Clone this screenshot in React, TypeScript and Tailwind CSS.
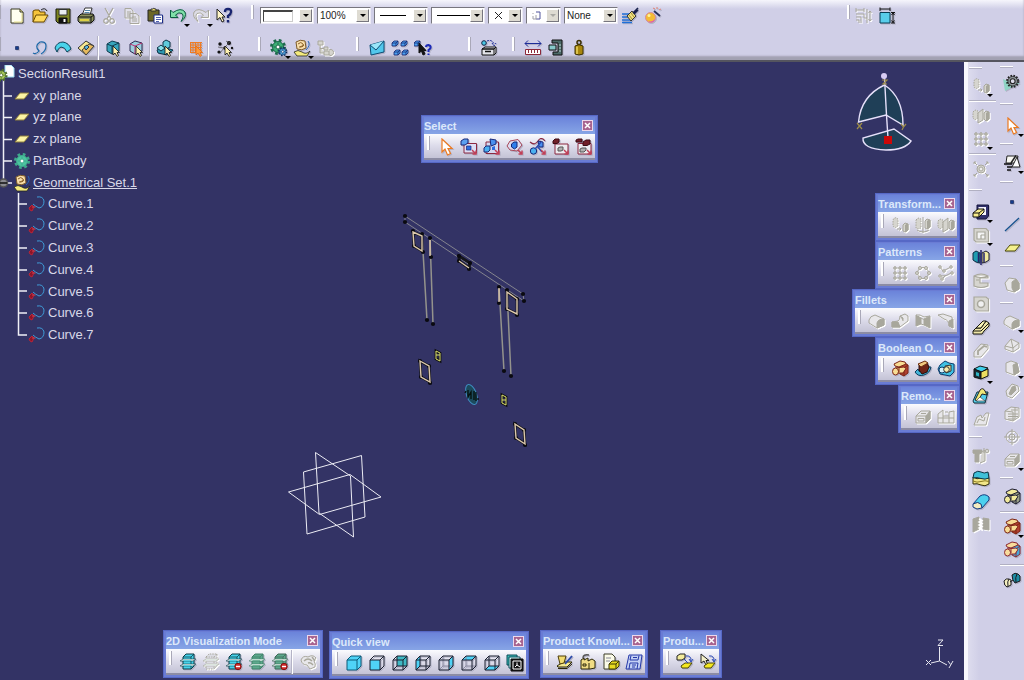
import React, { ReactNode } from "react";

const G = "#a8a79c";
const LG = "#d6d5cf";

/* ---------- shared drawing parts ---------- */

function Cube({ faces }: { faces: string[] }) {
  const c = "#4fd3f7";
  const on = (n: string) => faces.includes(n);
  return (
    <g strokeLinejoin="round">
      {on("back") && <path d="M6 2H16V12H6z" fill="#3fb8c4" stroke="none" />}
      {on("left") && <path d="M2 6L6 2V12L2 16z" fill={c} stroke="none" />}
      {on("bottom") && <path d="M2 16L6 12H16L12 16z" fill={c} stroke="none" />}
      {on("front") && <path d="M2 6H12V16H2z" fill={c} stroke="none" />}
      {on("top") && <path d="M2 6L6 2H16L12 6z" fill={c} stroke="none" />}
      {on("right") && <path d="M12 6L16 2V12L12 16z" fill={c} stroke="none" />}
      {!on("solid") && !on("front") && (
        <path d="M6 2V12H16M6 12L2 16" stroke={on("back") || on("left") || on("bottom") ? "#1a2030" : "#8a8aa0"} />
      )}
      {on("solid") && <path d="M2 6L6 2H16V12L12 16H2z" fill={c} stroke="none" />}
      <path d="M2 6H12V16H2zM2 6L6 2H16V12L12 16M12 6L16 2" stroke={on("solid") ? "#0d5a78" : "#1a2030"} />
    </g>
  );
}

function Gear({ fill, stroke }: { fill: string; stroke: string }) {
  return (
    <g>
      <circle cx="9" cy="9" r="6.5" stroke={stroke} strokeWidth="3" strokeDasharray="2.6 2.5" />
      <circle cx="9" cy="9" r="5.5" fill={fill} stroke={stroke} />
      <circle cx="9" cy="9" r="2" fill="#fff" stroke={stroke} />
      <path d="M9 4.5v2M9 11.5v2M4.5 9h2M11.5 9h2" stroke={stroke} />
    </g>
  );
}

function Cursor({ fill = "#fff", stroke = "#111" }: { fill?: string; stroke?: string }) {
  return <path d="M9 7V16L11 14L13 17.5L14.5 16.5L13 13.5H15.5z" fill={fill} stroke={stroke} strokeWidth=".8" />;
}

function Sheets({ fill, line, dashed }: { fill: string; line: string; dashed?: boolean }) {
  return (
    <g strokeLinejoin="round">
      <path d="M4 4L7 1H15V13L12 16H4z" fill={fill} stroke={line} strokeDasharray={dashed ? "1.5 1" : undefined} />
      <path d="M4 4H12V16M12 4L15 1" stroke={line} strokeWidth=".8" strokeDasharray={dashed ? "1.5 1" : undefined} />
      <path d="M1 8L4 6H17L14 8zM1 13L4 11H17L14 13z" stroke={line} strokeWidth=".6" fill="#f2fffb" />
      <path d="M4.500 7.500H12M4.500 12.500H12" stroke={fill} strokeWidth=".8" />
    </g>
  );
}

function Solids({ a, b, line }: { a: string; b: string; line: string }) {
  return (
    <g stroke={line} strokeLinejoin="round">
      <path d="M9 6L13 3L17 5V13L13 16L9 14z" fill={b} />
      <path d="M13 8V16M13 8L17 5" />
      <path d="M3 4L9 1L14 2L15 4L8 7L4 6z" fill={a} />
      <path d="M4 8L13 7L15 8.500L12 13H4z" fill={a} />
      <ellipse cx="4.500" cy="11.500" rx="3" ry="3.500" fill={a} />
      <path d="M8 7V12" />
    </g>
  );
}

function SmallBox({ x, y }: { x: number; y: number }) {
  return (
    <path
      d={`M${x} ${y + 2}l2-2h4v3l-2 2h-4zM${x} ${y + 2}h4v3M${x + 4} ${y + 2}l2-2`}
      fill="#4aa0f0"
      stroke="#16246c"
      strokeWidth=".8"
    />
  );
}

function PinkArrow() {
  return <path d="M12 12L15.500 15.500M16 12.500V16H12.500" stroke="#c04058" strokeWidth="1.5" />;
}

const icons: Record<string, ReactNode> = {
  newFile: (
    <g>
      <path d="M3 2H12L15 5V16H3z" fill="#fffff0" stroke="#3a3a20" />
      <path d="M12 2V5H15" fill="#e8e0a0" stroke="#3a3a20" />
      <path d="M14 6V15H6" stroke="#e8e090" />
    </g>
  ),
  open: (
    <g>
      <path d="M2 15V4L4 3H8L9 5H14V8" fill="#f6c43c" stroke="#6a4a00" />
      <path d="M2 15L5 8H17L13 15z" fill="#ffd95c" stroke="#6a4a00" />
      <path d="M10 3Q14 0 16 4" stroke="#222" />
    </g>
  ),
  save: (
    <g>
      <path d="M2 2H16V16H4L2 14z" fill="#7d8422" stroke="#16180a" />
      <path d="M5 2.500H13V8H5z" fill="#e9ecef" stroke="#333" />
      <path d="M5 11H13V16H5z" fill="#111" />
      <path d="M10.500 12V15" stroke="#fff" strokeWidth="2" />
    </g>
  ),
  print: (
    <g>
      <path d="M5 8L8 1H15L13 8z" fill="#fff" stroke="#333" />
      <path d="M8 3.500H13M7.500 5.500H12.500" stroke="#58a" />
      <path d="M1 10L4 7H16L17 9V13L14 16H3L1 14z" fill="#8a905c" stroke="#111" />
      <path d="M1 10H14L17 8M14 10V16" stroke="#111" />
      <path d="M3 13H12" stroke="#f0e040" strokeWidth="1.600" />
    </g>
  ),
  cut: (
    <path d="M5 1L11 12M13 1L7 12M7 12a2 2 0 1 0-2 4a2 2 0 0 0 2-4M11 12a2 2 0 1 1 2 4a2 2 0 0 1-2-4" stroke={G} strokeWidth="1.300" />
  ),
  copy: (
    <path
      d="M2 1.500H8L10 4V11H2zM7 6.500H13L16 9V16.500H7zM4 5H8M4 7H7M4 9H7M9 10H13M9 12H14M9 14H14"
      stroke={G}
      fill="#e2e1ea"
    />
  ),
  paste: (
    <g>
      <path d="M2 3H13V14H2z" fill="#6b6626" stroke="#222" />
      <path d="M5 4V2H7Q7.500 .5 9 2H10V4z" fill="#f2e26c" stroke="#333" />
      <path d="M8 8H16.500V16H8z" fill="#fff" stroke="#1c2c88" />
      <path d="M10 10.500H15M10 12.500H15M10 14.500H13" stroke="#5060b0" />
    </g>
  ),
  undo: <path d="M1.500 3V10.500H9L6.500 8Q10 4.500 13 6.500Q15.500 9 12 14.500Q18 10 16 5Q12 0 4 5.500z" fill="#7fe0a8" stroke="#0c5c40" />,
  redo: <path d="M16.500 3V10.500H9L11.500 8Q8 4.500 5 6.500Q2.500 9 6 14.500Q0 10 2 5Q6 0 14 5.500z" fill="#dddce6" stroke={G} />,
  helpArrow: (
    <g>
      <path d="M2 2V13L5 10.500L7 15L9 14L7 10H10z" fill="#fff6c8" stroke="#222" />
      <path d="M10 5Q10 2 13 2Q16.500 2 16 5Q16 7 13 9V11M13 13V15.500" stroke="#182470" strokeWidth="2.400" />
    </g>
  ),
  point: <path d="M7.500 7.500H10.500V10.500H7.500z" fill="#143c8c" stroke="#0a1c50" strokeWidth=".6" />,
  spline: <path d="M2 14Q5 16 8 12Q3 7 9 3Q15 2 15 7Q15 12 10 15" stroke="#1c68a8" strokeWidth="1.200" />,
  surface: <path d="M1 9Q3 3 9 3Q15 4 17 10L13 13Q11 8 7 8Q4 9 3 13z" fill="#49d3ea" stroke="#0c4058" />,
  tag: (
    <g>
      <path d="M1 9L9 2L17 7L9 16z" fill="#f8e890" stroke="#333" />
      <path d="M5 11L12 5L17 7L9 16z" fill="#e6b95c" stroke="#444" />
      <path d="M7 8L10 6L12 8L9 11z" fill="#5fb8dc" stroke="#234" />
    </g>
  ),
  solidPick: (
    <g>
      <path d="M3 5L8 2L15 4V12L8 15L3 12z" fill="#38a6bc" stroke="#103c50" />
      <path d="M3 5L8 7V15M8 7L15 4" stroke="#103c50" />
      <Cursor fill="#fff2b0" />
    </g>
  ),
  edgePick: (
    <g>
      <path d="M3 5L8 2L15 4V12L8 15L3 12z" fill="#9ccede" stroke="#2c2c50" />
      <path d="M3 5L8 7V15M8 7L15 4" stroke="#c03070" />
      <Cursor fill="#fff2b0" />
    </g>
  ),
  assemblyPick: (
    <g>
      <path d="M1 11L6 8L17 11L11 16L2 14z" fill="#2f9ab2" stroke="#0c3448" />
      <path d="M7 3L10 1L14 3V8L10 10L7 8z" fill="#5fcadb" stroke="#0c3448" />
      <path d="M1 9L5 6L9 9L5 12z" fill="#88e0ea" stroke="#0c3448" />
      <Cursor fill="#fff2b0" />
    </g>
  ),
  gridPick: (
    <g>
      <path
        d="M3 3.500H15M3 6H15M3 8.500H15M3 11H15M3 13.500H15M3.500 3V14M6 3V14M8.500 3V14M11 3V14M13.500 3V14"
        stroke="#ef7c24"
      />
      <Cursor fill="#ff9c3c" stroke="#e46c14" />
    </g>
  ),
  dotsPick: (
    <g>
      <g fill="#111" stroke="none">
        <circle cx="4" cy="5" r="1.700" />
        <circle cx="13" cy="4" r="2" />
        <circle cx="9" cy="9" r="1.800" />
        <circle cx="3" cy="13" r="1.600" />
        <circle cx="16" cy="9" r="1.200" />
      </g>
      <path d="M2 8L8 9L14 3M4 14L8 9M13 4L10 2" stroke="#444" strokeWidth=".7" />
      <Cursor fill="#fff2b0" />
    </g>
  ),
  greenGears: (
    <g>
      <g transform="translate(-1 -1)">
        <Gear fill="#3cae74" stroke="#1c6a4c" />
      </g>
      <g transform="translate(7.500 7.500) scale(.58)">
        <Gear fill="#52a8e0" stroke="#0a2c60" />
      </g>
    </g>
  ),
  geomSet: (
    <g>
      <path d="M3 3Q7 0 12 2L13 9Q9 12 4 10z" fill="#f8deaa" stroke="#7c5a28" />
      <path d="M5 5Q8 2 10 5T6 8M7 8L11 6" stroke="#8a6028" />
      <path d="M1 13Q5 10 9 13Q13 16 17 12L14 17H4z" fill="#f4ea7c" stroke="#222" strokeWidth=".8" />
      <path d="M15 2Q18 6 13 11" stroke="#2c68b8" />
    </g>
  ),
  treeDisabled: <path d="M2 2H7V6H2zM8 8H12V11H8zM4 6V14H8M4 9.500H8M8 12H13V16H8zM13 11a3 3 0 1 1 0 5" stroke={G} fill={LG} />,
  envelope: (
    <g>
      <path d="M2 6L16 2V13L3 16z" fill="#52c8ec" stroke="#0d4c74" />
      <path d="M2 6L8 11L16 2" stroke="#0d4c74" fill="#9ae6fa" />
    </g>
  ),
  fourBoxes: (
    <g>
      <SmallBox x={1} y={2} />
      <SmallBox x={10} y={2} />
      <SmallBox x={3} y={11} />
      <SmallBox x={11} y={11} />
    </g>
  ),
  boxHelp: (
    <g>
      <SmallBox x={0} y={2} />
      <path d="M5 4V14L7.500 12L9 16L11 15L9.500 11.500H12z" fill="#111" />
      <path d="M12 8Q12 6 14.500 6Q17 6.500 16.500 9Q16 10 14.500 11V13M14.500 14.500V16" stroke="#1c2ab8" strokeWidth="2" />
    </g>
  ),
  catalog: (
    <g>
      <path d="M2 10L5 8H16L14 10zM2 10H14V16H2zM14 10L16 8V14L14 16" fill="#e4e4ea" stroke="#111" />
      <path d="M5 12.500H11" stroke="#111" strokeWidth="1.500" />
      <circle cx="4" cy="4" r="2.300" fill="#4ac8e4" stroke="#124" />
      <path d="M7 2Q12 0 14 5M12 4L14 7L16 4" stroke="#1c2c98" strokeDasharray="2 1" />
    </g>
  ),
  measure: (
    <g>
      <path d="M1 4.500H17M4 1.500L1 4.500L4 7.500M14 1.500L17 4.500L14 7.500" stroke="#1c2c98" />
      <path d="M1.500 10.500H16.500V15.500H1.500z" fill="#fff" stroke="#8c2838" />
      <path d="M4.500 11V14M7.500 11V14M10.500 11V14M13.500 11V14" stroke="#8c2838" />
    </g>
  ),
  caliper: (
    <g>
      <path d="M5 1H15V16H6V13H11V4H5z" fill="#4c6a68" stroke="#111" />
      <path d="M2 6H9V11H2z" fill="#86c8ca" stroke="#111" />
      <path d="M12 6H14M12 9H14M12 12H14" stroke="#c0d8d8" />
    </g>
  ),
  weight: (
    <g>
      <circle cx="9" cy="3.500" r="2" stroke="#3c3000" strokeWidth="1.500" />
      <path d="M5 7Q9 4.500 13 7V15Q9 17 5 15z" fill="#a8860c" stroke="#3c3000" />
      <path d="M7 7.500V15" stroke="#ecd460" strokeWidth="1.500" />
    </g>
  ),
  brush: (
    <g>
      <path d="M1 7H9M1 10H8M1 13H10M1 15.500H11" stroke="#1f6fd8" strokeWidth="1.500" />
      <path d="M6 9L11 4L15 9L10 14z" fill="#f2e27c" stroke="#333" />
      <path d="M8 8L11 12M10 6L13 10" stroke="#8c7c30" strokeWidth=".8" />
      <path d="M12 6L17 1M13 7L17 3" stroke="#18204c" strokeWidth="1.600" />
    </g>
  ),
  wand: (
    <g>
      <circle cx="6.500" cy="10.500" r="5" fill="#f4bc34" stroke="#d48aa0" />
      <path d="M2 12Q6 17 11 12Q10 16 6 15.500z" fill="#e060b0" stroke="none" />
      <circle cx="5" cy="8.500" r="1.500" fill="#fff29c" stroke="none" />
      <path d="M10 4L16 9" stroke="#28305c" strokeWidth="1.800" />
      <path d="M9 1L11 2M13 0V2M15 3L17 2" stroke="#e08070" />
    </g>
  ),
  dimOff: (
    <path
      d="M1 3H9M1 1V5M9 1V5M1 7H9V11H12M1 10H6V16M1 13H4V16M12 2V16M15 4V14M13.500 6L15 4L16.500 6M13.500 12L15 14L16.500 12"
      stroke={G}
      fill="none"
    />
  ),
  dimOn: (
    <g>
      <path d="M2 5.500H12V16H2z" fill="#58cdea" stroke="#0a3c54" />
      <path d="M2 2H12M2 .5V4M12 .5V4M15 5.500V16M13 5.500H17M13 16H17M13.500 8L15 6L16.500 8M13.500 13.500L15 15.500L16.500 13.500" stroke="#111" />
    </g>
  ),

  orangeArrow: <path d="M5 1V14L8 11L10.500 17L13.500 15.500L11 10.500H15z" fill="#fff" stroke="#ec7a20" strokeWidth="1.200" />,
  selTrap: (
    <g>
      <path d="M4 5.500H16.500V15H4z" fill="#dcdef4" stroke="#8c2840" />
      <path d="M1 3L4 1H8V5L5 7H1z" fill="#5aa0f0" stroke="#182878" />
      <path d="M6.500 8H11V12H6.500z" fill="#2c6ce0" stroke="#182878" strokeWidth=".7" />
      <PinkArrow />
    </g>
  ),
  selIntersect: (
    <g>
      <path d="M3 4H15.500V15.500H3z" fill="#d4d8f0" stroke="#8c2840" />
      <path d="M7 1L13 2V6L8 8z" fill="#4a90f0" stroke="#182878" />
      <path d="M1 10L3 8H7V12L5 14H1z" fill="#4ab0f0" stroke="#182878" />
      <path d="M9 9L12 8V12H9z" fill="#2c6ce0" stroke="none" />
      <PinkArrow />
    </g>
  ),
  selPolygon: (
    <g>
      <path d="M1 8L4 3L12 1.500L16 7L11 13L4 12z" fill="#dcdcf0" stroke="#a84858" />
      <path d="M5.500 6L8 4H11V9L8.500 11L5.500 9z" fill="#2f80ec" stroke="#142878" />
      <PinkArrow />
    </g>
  ),
  selPaint: (
    <g>
      <path d="M1 4Q6 8 9 3T16 3" stroke="#8c2840" strokeWidth="1.200" />
      <path d="M9 3L14 4V9L10 9z" fill="#4a90f0" stroke="#182878" />
      <circle cx="4.500" cy="13" r="3.200" fill="#4ab0f0" stroke="#182878" />
      <path d="M6 11L12 4M8 8L13 14" stroke="#2a4ab0" strokeWidth="1.300" />
      <PinkArrow />
    </g>
  ),
  selOutTrap: (
    <g>
      <path d="M3 6H16V16H3z" fill="#ececf0" stroke="#8c2840" />
      <path d="M1 3L3 1H7V4L5 5.500H1z" fill="#702028" stroke="#3c0c14" />
      <path d="M6 10L8 9H11V12L9 13H6z" fill="#b0b0b0" stroke="#555" />
      <PinkArrow />
    </g>
  ),
  selOutIntersect: (
    <g>
      <path d="M3 5.500H16V16H3z" fill="#ececf0" stroke="#8c2840" />
      <path d="M1 2L3 1H7V4H1zM8 4L11 2H15V6L12 7.500H8z" fill="#702028" stroke="#3c0c14" />
      <path d="M5 11L7 10H11V12L9 14H5z" fill="#b0b0b0" stroke="#555" />
      <PinkArrow />
    </g>
  ),

  translate: (
    <g stroke={G} fill={LG}>
      <path d="M2 4Q4 0 7 3V10Q4 13 2 10z" strokeDasharray="1.500 1" />
      <path d="M12 9L14 7L17 8V14L14 16L12 15z" />
      <path d="M14.500 9L17 8V14L14.500 16z" fill={G} />
      <path d="M6 13H10M8.500 11.500L10 13L8.500 14.500" />
    </g>
  ),
  rotate: (
    <g stroke={G} fill={LG}>
      <path d="M2 4L4 2L7 3V12L4 13L2 12z" strokeDasharray="1.500 1" />
      <path d="M11 5L13 3L16 4V11L13 13L11 12z" />
      <path d="M13.500 5L16 4V11L13.500 13z" fill={G} />
      <path d="M9 1V17M3 14Q9 18 15 14" fill="none" />
    </g>
  ),
  mirror: (
    <g stroke={G} fill={LG}>
      <path d="M1 5L3 3L6 4V11L3 13L1 11z" strokeDasharray="1.500 1" />
      <path d="M12 6L14 4L17 5V12L14 14L12 12z" />
      <path d="M14.500 6L17 5V12L14.500 14z" fill={G} />
      <path d="M6 6L11 2V13L6 16z" />
    </g>
  ),
  rectPattern: (
    <g stroke={G}>
      <path d="M4 2V16M9 2V16M14 2V16M2 4H16M2 9H16M2 14H16" strokeWidth=".8" />
      <path d="M3 3h2v2h-2zM8 3h2v2h-2zM13 3h2v2h-2zM3 8h2v2h-2zM8 8h2v2h-2zM13 8h2v2h-2zM3 13h2v2h-2zM8 13h2v2h-2zM13 13h2v2h-2z" fill={LG} />
    </g>
  ),
  circPattern: (
    <g stroke={G} fill={LG}>
      <circle cx="9" cy="9" r="5.500" fill="none" />
      <circle cx="6" cy="4" r="1.500" />
      <circle cx="12" cy="4" r="1.500" />
      <circle cx="15" cy="9" r="1.500" />
      <circle cx="12" cy="14" r="1.500" />
      <circle cx="6" cy="14" r="1.500" />
      <circle cx="3" cy="9" r="1.500" />
    </g>
  ),
  userPattern: (
    <g stroke={G} fill={LG}>
      <path d="M3 3L6 7L14 3M3 12Q9 13 14 9M4 16L9 11" fill="none" />
      <circle cx="3" cy="3" r="1.300" />
      <circle cx="7" cy="7" r="1.300" />
      <circle cx="14" cy="3" r="1.300" />
      <circle cx="3" cy="12" r="1.300" />
      <circle cx="15" cy="9" r="1.300" />
      <circle cx="5" cy="15" r="1.300" />
    </g>
  ),
  scale: (
    <g stroke={G} fill={LG}>
      <circle cx="9" cy="9" r="4" />
      <circle cx="9" cy="9" r="2" fill="#eee" />
      <path d="M2 2L5 5M16 2L13 5M2 16L5 13M16 16L13 13M2 4V2H4M14 2H16V4M2 14V16H4M14 16H16V14" />
    </g>
  ),
  fillet: (
    <g stroke={G}>
      <path d="M1 8Q2 4 7 3L16 7V13L9 16L1 11z" fill="#e8e7ea" />
      <path d="M9 16V11Q10 7 16 7V13z" fill={G} />
    </g>
  ),
  faceFillet: (
    <g stroke={G}>
      <path d="M1 10L7 9Q9 8 9 4L14 2L17 4V9L9 15H1z" fill="#e8e7ea" />
      <path d="M1 10H7L9 15H1zM9 4L12 6V9" fill={G} />
    </g>
  ),
  triFillet: (
    <g stroke={G}>
      <path d="M2 3L7 6V12L2 14zM16 4L10 7V13L16 16z" fill={G} />
      <path d="M7 6Q10 8 10 7V13L7 12zM2 3H6L10 5L16 4" fill="#e8e7ea" />
    </g>
  ),
  variFillet: (
    <g stroke={G}>
      <path d="M1 3L6 2L15 5L16 16L12 14Q12 8 7 7z" fill="#e8e7ea" />
      <path d="M12 9L16 7V16L12 14z" fill={G} />
    </g>
  ),
  chamfer: (
    <g stroke={G}>
      <path d="M2 10L8 3L16 7V12L10 16L2 13z" fill="#e8e7ea" />
      <path d="M2 10L10 12V16M10 12L16 7M8 3L10 12" />
    </g>
  ),
  draftBox: (
    <g stroke={G}>
      <path d="M3 4L8 2L14 4L16 13L11 16L3 13z" fill="#e8e7ea" />
      <path d="M10 6L14 4L16 13L11 16z" fill={G} />
    </g>
  ),
  shellBox: (
    <g stroke={G}>
      <path d="M2 8L7 3H16V11L12 15H2z" fill="#e8e7ea" />
      <path d="M12 8L16 3V11L12 15z" fill={G} />
      <path d="M2 8H12V15M4 10.500H10V13H4zM7 5.500H12" />
    </g>
  ),
  removeFace: (
    <g stroke={G}>
      <path d="M1 6L6 2V8H12V4L17 3V15H1z" fill="#e8e7ea" />
      <path d="M6 8V15M12 8V15M1 10H17M8 4H11" />
    </g>
  ),
  thickness: (
    <g stroke={G}>
      <path d="M3 9L9 2L15 4L16 9L9 16L4 14z" fill="#e8e7ea" />
      <path d="M9 5L12 4L13 8L8 13L6 12z" fill={G} />
    </g>
  ),
  hexBlock: (
    <g stroke={G}>
      <path d="M2 7L6 2L13 3L16 7V13L11 16L4 14z" fill="#e8e7ea" />
      <path d="M9 6L13 3L16 7V13L11 16L9 12z" fill={G} />
    </g>
  ),
  thread: (
    <g stroke={G}>
      <path d="M2 6L8 2L16 3V12L10 16L2 14z" fill="#e8e7ea" />
      <path d="M2 6L10 7V16M5 9H15M5 11.500H15M5 14H12M8 5H15M12 3V14" />
    </g>
  ),
  target: (
    <g stroke={G}>
      <circle cx="9" cy="9" r="6" />
      <circle cx="9" cy="9" r="3" />
      <path d="M9 1V17M1 9H17" />
    </g>
  ),

  boolAssemble: <Solids a="#f8dc94" b="#b04030" line="#7c2414" />,
  boolAdd: (
    <g strokeLinejoin="round">
      <path d="M1 12Q4 17 10 15Q16 13 17 7L14 7Q13 12 8 12Q4 12 4 9z" fill="#44b4d8" stroke="#0c3c5c" />
      <path d="M5 4L13 3L15 7L13 12L8 14L5 10z" fill="#702418" stroke="#2a0c08" />
      <path d="M4 4L11 1L14 3L7 7z" fill="#f0c880" stroke="#6c2c10" />
    </g>
  ),
  boolRemove: (
    <g>
      <path d="M3 5L8 1L12 3L17 4V12L13 16L3 14L1 9z" fill="#3fc0e4" stroke="#0c3c6c" />
      <path d="M8 6L14 5V11L9 13z" fill="#f4dc94" stroke="#333" />
      <circle cx="5" cy="10" r="3" fill="#d6f0fa" stroke="#0c3c6c" />
      <circle cx="9.500" cy="9.500" r="2.800" fill="#f8ecb0" stroke="#333" />
    </g>
  ),
  boolTrim: <Solids a="#f2ea9c" b="#9aa088" line="#1c1c30" />,
  boolLump: <Solids a="#f8dc9c" b="#44a8dc" line="#8c2830" />,
  boolPair: (
    <g stroke="#1c1c20">
      <path d="M1 10Q3 7 6 8L8 9V14L4 16Q1 15 1 10z" fill="#f4efc0" />
      <path d="M6 8Q4 10 5 15.500" />
      <path d="M9 4Q12 1 15 3L17 5V10L12 12Q9 9 9 4z" fill="#1d8ca4" />
      <path d="M14 3Q12 6 13 11.500" />
      <path d="M7 11L10 9" />
    </g>
  ),

  pad: (
    <g>
      <path d="M5 2H16.500V13L14 16H5z" fill="#30306c" stroke="#14143c" />
      <path d="M6.500 4H14V12H6.500z" fill="#f4f4fc" stroke="none" />
      <path d="M1 10L6 6H12V9L7 14H1z" fill="#f8ec8c" stroke="#111" />
      <path d="M1 10H7V14M7 10L12 6" stroke="#111" />
    </g>
  ),
  pocket: (
    <g stroke={G} strokeWidth="1.200">
      <path d="M2 2.500H14L16.500 5V16H4L2 14z" fill={LG} />
      <path d="M5 6H13V13H5z" fill="#f4f4f4" />
      <path d="M9 9H13M9 9V13" />
    </g>
  ),
  shaft: (
    <g>
      <path d="M1 4L4 2L8 4V14L4 13L1 11z" fill="#1f9cb0" stroke="#0c2c44" />
      <path d="M17 4L14 2L10 4V14L14 13L17 11z" fill="#f0eaa0" stroke="#1c1c30" />
      <path d="M9 1V16M6.500 4V13M12 4V13" stroke="#24246c" strokeWidth="1.500" />
    </g>
  ),
  groove: <path d="M2 4Q9 0 16 4V6H8V11H16V14Q9 17 2 14zM2 4Q9 7 16 4M4 8H7" stroke={G} fill={LG} strokeWidth="1.200" />,
  hole: (
    <g stroke={G} fill={LG}>
      <path d="M2 2H14L16.500 4V16H4L2 14z" strokeWidth="1.200" />
      <circle cx="9" cy="9" r="3.500" strokeWidth="1.500" fill="#f0f0f0" />
    </g>
  ),
  rib: (
    <g stroke="#181810" strokeLinejoin="round">
      <path d="M1 13L4 10H9L14 3L17 5V8L12 13L10 16H1z" fill="#efe7a8" />
      <path d="M4 10L11 3L14 3L9 10z" fill="#f8f2b4" />
      <path d="M1 13H9L17 5" />
    </g>
  ),
  slot: (
    <g stroke={G}>
      <path d="M2 11L9 3L16 4V8L9 16H2z" fill="#e8e7ea" />
      <path d="M6 14V10L12 5L15 6" strokeWidth="1.800" />
    </g>
  ),
  stiffener: (
    <g>
      <path d="M2 5L8 2L16 4L10 8z" fill="#3fd0ec" stroke="#111" />
      <path d="M2 5V13L9 15V8z" fill="#1a2c34" stroke="#111" />
      <path d="M9 8L16 5V12L9 15z" fill="#ecdf60" stroke="#111" />
      <path d="M4 8V11.500L7 12.500V9z" fill="#2fb4c4" stroke="none" />
    </g>
  ),
  loft: (
    <g>
      <path d="M1 14L5 5H16L13 16H2z" fill="#52cdea" stroke="#14303c" />
      <path d="M3 13L8 3Q11 0 13 4L15 8L10 7L6 14z" fill="#f0e878" stroke="#222" />
      <path d="M8 10L13 14H4z" fill="#fff" stroke="#444" strokeWidth=".7" />
    </g>
  ),
  removeLoft: (
    <g stroke={G}>
      <path d="M2 15L5 7L9 5L10 8L14 3H17L14 15z" fill="#e8e7ea" />
      <path d="M5 13L7 9L12 11L13 7" />
    </g>
  ),
  split: (
    <g stroke={G}>
      <path d="M1 3H10V6L7 7V15H3V7L1 6z" fill={G} />
      <path d="M10 5L13 3V14L8 16" fill={LG} />
      <circle cx="15" cy="4" r="1.800" fill={LG} />
      <path d="M12 1V6" />
    </g>
  ),
  thickSurface: (
    <g>
      <path d="M1 7Q5 10 9 8T17 8V14Q13 17 9 15T1 14z" fill="#f2e688" stroke="#34300c" />
      <path d="M2 3Q6 0 9 2T16 2L17 8Q13 10 9 8.500T1 8z" fill="#3fc0d8" stroke="#0c3444" />
      <path d="M1 11Q5 13 9 11.500T17 11.500" stroke="#8c7c20" />
    </g>
  ),
  closeSurface: (
    <g>
      <path d="M1 11L8 3Q13 0 17 4V7L10 15Q9 9 4 10z" fill="#4bd0ee" stroke="#123c80" />
      <path d="M1 11Q6 8 9 11L10 15L5 16L1 14z" fill="#f4ecc0" stroke="#123c80" />
    </g>
  ),
  sew: (
    <g stroke={G}>
      <path d="M1 3L7 1V13L1 16zM11 2L17 3V14L11 13z" fill={G} />
      <path d="M7 3L10 4.500L7 6L10 7.500L7 9L10 10.500L7 12L10 13.500" stroke="#fff" strokeWidth="1.400" />
    </g>
  ),

  gearSurface: (
    <g>
      <path d="M0 5L9 9L17 9L2 17z" fill="#8fd4c4" stroke="none" />
      <g transform="translate(2.500 0) scale(.8)">
        <circle cx="9" cy="9" r="7" stroke="#222" strokeWidth="2.500" strokeDasharray="2 1.670" />
        <circle cx="9" cy="9" r="6" fill="#8c9496" stroke="#222" />
        <circle cx="9" cy="9" r="3" fill="#dcdce8" stroke="#222" strokeWidth="1.300" />
      </g>
    </g>
  ),
  sketch: (
    <g>
      <path d="M4 2H15L13 9H3z" fill="#fafaf4" stroke="#222" />
      <path d="M9 13L14 3L17 13z" fill="#fff" stroke="#222" />
      <path d="M8 9L13 1.500" stroke="#222" strokeWidth="1.500" />
      <path d="M1 10H9M4 13H9M4 16H8" stroke="#111" strokeWidth="1.500" />
    </g>
  ),
  line: <path d="M2 15L16 2" stroke="#14508c" strokeWidth="1.200" />,
  plane: <path d="M2 12L7 6H17L12 12z" fill="#f4f08c" stroke="#4c4a08" />,

  sheetCyan: <Sheets fill="#46d2ea" line="#0b3c48" />,
  sheetOff: <Sheets fill="#dcdce4" line={G} dashed />,
  sheetStop: (
    <g>
      <Sheets fill="#46d2ea" line="#0b3c48" />
      <circle cx="13" cy="13.500" r="3.200" fill="#d02c2c" stroke="#801010" />
      <path d="M11 13.500H15" stroke="#fff" strokeWidth="1.400" />
    </g>
  ),
  sheetGreen: <Sheets fill="#5ca88c" line="#3f8068" />,
  sheetGreenStop: (
    <g>
      <Sheets fill="#5ca88c" line="#3f6858" />
      <circle cx="13" cy="13.500" r="3.200" fill="#d02c2c" stroke="#801010" />
      <path d="M11 13.500H15" stroke="#fff" strokeWidth="1.400" />
    </g>
  ),
  cloudOff: (
    <g stroke={G} fill="#e8e7ea">
      <path d="M1 7Q3 2 8 4Q13 1 16 5L14 8Q16 11 15 14L10 16L7 12Q2 12 1 7z" />
      <path d="M4 8Q8 4 12 8M8 10Q11 9 13 12M12 4L15 8" strokeWidth="1.400" fill="none" />
    </g>
  ),

  cubeSolid: <Cube faces={["solid"]} />,
  cubeFront: <Cube faces={["front"]} />,
  cubeBack: <Cube faces={["back"]} />,
  cubeLeft: <Cube faces={["left"]} />,
  cubeRight: <Cube faces={["right"]} />,
  cubeTop: <Cube faces={["top"]} />,
  cubeBottom: <Cube faces={["bottom"]} />,
  namedViews: (
    <g>
      <path d="M1 1H11V11H1z" fill="#38b8b4" stroke="#0c4c58" />
      <path d="M3 3H14V14H3z" fill="#dff" stroke="#0c4c58" />
      <path d="M5 5H17V17H5z" fill="#111" stroke="#111" />
      <path d="M7 7H15V15H7z" stroke="#fff" />
      <path d="M9 13L11 11L14 13M11 11V8.500" stroke="#fff" />
    </g>
  ),

  bookPen: (
    <g>
      <path d="M1 13L7 9H16L11 14H2z" fill="#f4e890" stroke="#2c2808" />
      <path d="M2 3H10L8 10L4 11z" fill="#f2dc70" stroke="#4c3c08" />
      <path d="M2 15.500H11L16 11" stroke="#2c2808" />
      <path d="M9 11L16 3" stroke="#2848a8" strokeWidth="1.800" />
    </g>
  ),
  factory: (
    <g>
      <path d="M2 7L5 5V7L9 5V8L13 6L16 8V15L11 16H2z" fill="#f0dc84" stroke="#2c2808" />
      <path d="M4 5Q4 1 10 2" stroke="#555" strokeWidth="1.500" />
      <path d="M4 11H7V13H4zM10 10V16" stroke="#2c2808" />
    </g>
  ),
  pageBrick: (
    <g>
      <path d="M2 1H10L13 4V16H2z" fill="#fbfbe8" stroke="#3c3c28" />
      <path d="M4 5H9M4 8H8" stroke="#889" />
      <path d="M7 11L10 8H17V13L14 16H7z" fill="#e8dc20" stroke="#3c3804" />
      <path d="M7 11H14V16M14 11L17 8" stroke="#3c3804" />
    </g>
  ),
  blueDisk: (
    <g>
      <path d="M4 2H17L15 16H1z" fill="#c4d0f4" stroke="#2438a8" />
      <path d="M6 2.500L5 7H13L14 2.500M4 16L5 10H13L12 16M7 12H11M7 14H10M8 4.500H12" stroke="#2438a8" />
    </g>
  ),
  transferA: (
    <g>
      <path d="M1 3L4 1H9V5L6 7H1z" fill="#f4ec9c" stroke="#222" />
      <path d="M5 13L9 10H16L12 15H6z" fill="#f4e820" stroke="#4c4808" />
      <path d="M10 3Q15 2 15 8M13 6L15 9L17 6M8 6L12 10" stroke="#2848b8" />
    </g>
  ),
  transferB: (
    <g>
      <path d="M2 1V10L5 8L7 12L8.500 11L7 7.500H10z" fill="#f4f0c8" stroke="#222" />
      <path d="M5 13L9 10H16L12 15H6z" fill="#f4e820" stroke="#4c4808" />
      <path d="M10 3Q15 2 15 8M13 6L15 9L17 6" stroke="#2848b8" />
    </g>
  ),

  treeRoot: (
    <g>
      <path d="M7 0H13L16 3V12H7z" fill="#fff" stroke="#9adcf0" />
      <g transform="translate(-4 3) scale(.8)">
        <Gear fill="#a8c85c" stroke="#4c6c2c" />
      </g>
    </g>
  ),
  treePlane: <path d="M2 12L7 6H16L11 12z" fill="#fcf4a4" stroke="#8c7c3c" />,
  treeGear: <Gear fill="#4cc4a0" stroke="#3fa88c" />,
  treeCurve: (
    <g>
      <path d="M9 2Q15 1 16 6Q16 12 11 13Q7 11 5 9" stroke="#3f9cd8" />
      <path d="M1 13L4 10L6 12L4 16L2 15z" fill="#8c1428" stroke="#b82438" />
      <path d="M4 12H7.500" stroke="#d04050" />
    </g>
  ),
};

function Icon({ name, className = "" }: { name: string; className?: string }) {
  return (
    <svg viewBox="0 0 18 18" fill="none" stroke="#111" aria-hidden="true" className={`h-[18px] w-[18px] shrink-0 ${className}`}>
      {icons[name]}
    </svg>
  );
}

/* ---------- controls ---------- */

type ToolProps = { icon: string; label: string; off?: boolean; menu?: boolean };

function Tool({ icon, label, off, menu }: ToolProps) {
  return (
    <button type="button" aria-label={label} disabled={off} className="relative flex h-[23px] w-[23px] shrink-0 items-center justify-center">
      <Icon name={icon} className={off ? "drop-shadow-[1px_1px_0_#ffffff]" : "drop-shadow-[1px_1px_0_#b2b1c6]"} />
      {menu && <span className="absolute -right-px bottom-0 h-0 w-0 border-x-[3px] border-t-[3px] border-x-transparent border-t-black" />}
    </button>
  );
}

function Tools({ items }: { items: ToolProps[] }) {
  return (
    <>
      {items.map((t) => (
        <Tool key={t.label} {...t} />
      ))}
    </>
  );
}

function Grip({ className = "" }: { className?: string }) {
  return <span className={`h-3.5 w-[3px] shrink-0 border-l-2 border-r border-l-white border-r-[#a9a8b8] ${className}`} />;
}

function Divider({ className = "" }: { className?: string }) {
  return <span className={`h-6 w-0.5 shrink-0 border-r border-l border-r-white border-l-[#b4b3c6] ${className}`} />;
}

type ComboProps = { label: string; value: string; small?: boolean; off?: boolean; children?: ReactNode };

function Combo({ label, value, small, off, children }: ComboProps) {
  return (
    <div
      className={`relative h-[17px] shrink-0 border border-t-[#77767e] border-r-[#eceaf4] border-b-[#eceaf4] border-l-[#77767e] bg-white ${small ? "w-[35px]" : "w-[54px]"}`}
    >
      <select
        aria-label={label}
        disabled={off}
        defaultValue={value}
        className="block h-[15px] w-full appearance-none bg-transparent py-0 pr-3.5 pl-0.5 text-[10px] leading-[13px] text-[#222]"
      >
        <option>{value}</option>
      </select>
      {children && <span className="pointer-events-none absolute inset-y-0 right-3.5 left-0 flex items-center justify-center">{children}</span>}
      <span className="pointer-events-none absolute top-px right-px flex h-[13px] w-[13px] items-center justify-center border border-t-white border-r-[#77767e] border-b-[#77767e] border-l-white bg-[#dedbd2]">
        <span className={`border-x-[3px] border-t-[3px] border-x-transparent ${off ? "border-t-[#aaa9a4]" : "border-t-black"}`} />
      </span>
    </div>
  );
}

type PaletteProps = { title: string; items: ToolProps[]; after?: ToolProps[]; className?: string };

function Palette({ title, items, after, className = "" }: PaletteProps) {
  return (
    <section
      aria-label={title}
      className={`flex flex-col border-[3px] border-t-2 border-[#6a7cd4] bg-[#6a7cd4] outline outline-1 -outline-offset-1 outline-[#5668c6] ${className}`}
    >
      <header className="flex h-[17px] items-center justify-between bg-linear-to-b from-[#6b83da] to-[#87a5e6] pr-0.5">
        <h2 className="text-[11px] leading-4 font-bold whitespace-nowrap text-[#dce8fa]">{title}</h2>
        <button type="button" aria-label={`Close ${title}`} className="flex h-[11px] w-[11px] items-center justify-center border border-[#ecd8ec] bg-[#a86490]">
          <svg viewBox="0 0 7 7" className="h-[7px] w-[7px]" stroke="#fff" strokeWidth="1.5" aria-hidden="true">
            <path d="M1 1L6 6M6 1L1 6" />
          </svg>
        </button>
      </header>
      <div className="flex h-[26px] items-center border-b-2 border-[#8c8ca4] bg-linear-to-b from-[#fbfbfe] via-[#dcdbea] to-[#c4c3d6] pt-0.5 pl-[3px]">
        <Grip className="mr-1 mb-2" />
        <Tools items={items} />
        {after && (
          <>
            <Divider className="mr-1" />
            <Tools items={after} />
          </>
        )}
      </div>
    </section>
  );
}

function SideGrip({ className = "h-[14px]" }: { className?: string }) {
  return (
    <span className={`flex shrink-0 items-center ${className}`}>
      <span className="h-0.5 w-[13px] border-t border-b border-t-white border-b-[#b1b0c2]" />
    </span>
  );
}

function SideRule() {
  return (
    <span className="flex h-[7px] w-[27px] shrink-0 items-center">
      <span className="h-0.5 w-full border-t border-b border-t-[#b1b0c2] border-b-white" />
    </span>
  );
}

/* ---------- specification tree ---------- */

const tree = [
  { label: "SectionResult1", icon: "treeRoot", pad: "-ml-0.5" },
  { label: "xy plane", icon: "treePlane", pad: "pl-[13px]" },
  { label: "yz plane", icon: "treePlane", pad: "pl-[13px]" },
  { label: "zx plane", icon: "treePlane", pad: "pl-[13px]" },
  { label: "PartBody", icon: "treeGear", pad: "pl-[13px]" },
  { label: "Geometrical Set.1", icon: "geomSet", pad: "pl-[13px]", current: true },
  ...[1, 2, 3, 4, 5, 6, 7].map((n) => ({ label: `Curve.${n}`, icon: "treeCurve", pad: "pl-7" })),
] as { label: string; icon: string; pad: string; current?: boolean }[];

function SpecTree() {
  return (
    <nav aria-label="Specification tree" className="relative mt-px h-[283px] w-40">
      <svg viewBox="0 0 30 283" className="absolute top-0 left-0 h-[283px] w-[30px]" stroke="#f0f0f6" strokeWidth="1.5" fill="none" aria-hidden="true">
        <path d="M3.500 14V119M3.500 33H12M3.500 54.500H12M3.500 76.500H12M3.500 98H12M3.500 120H12M18.500 130V272H27M18.500 141H27M18.500 163H27M18.500 185H27M18.500 207H27M18.500 228H27M18.500 250H27" />
        <circle cx="3.500" cy="120" r="4" fill="#8a8a90" stroke="#555" />
        <path d="M0 120H7" stroke="#111" />
      </svg>
      <ul className="relative flex h-full flex-col">
        {tree.map((n) => (
          <li key={n.label} className={`flex flex-1 items-center ${n.pad}`}>
            <Icon name={n.icon} />
            <button type="button" className={`ml-0.5 text-[13px] leading-4 whitespace-nowrap text-[#d8d8e8] ${n.current ? "underline" : ""}`}>
              {n.label}
            </button>
          </li>
        ))}
      </ul>
    </nav>
  );
}

/* ---------- scene drawings ---------- */

const handles: [number, number][] = [
  [405, 216], [405, 222], [523, 294], [524, 301], [413, 231], [422, 234], [423, 252], [414, 246],
  [427, 320], [430, 238], [431, 257], [433, 324], [459, 256], [459, 261], [470, 263], [469, 269],
  [499, 287], [499, 303], [504, 371], [507, 290], [511, 376], [517, 299], [517, 315], [507, 309],
  [420, 361], [429, 366], [430, 383], [421, 377], [515, 424], [524, 430], [525, 445], [516, 438],
];

function Model() {
  return (
    <svg viewBox="400 208 132 244" className="absolute top-[146px] left-[400px] h-[244px] w-[132px]" fill="none" aria-label="Wireframe curves">
      <path d="M405 216L523 294M405 222L524 301M405 216V222M523 294L524 301" stroke="#84848e" />
      <path d="M422 234L427 320M430 238L433 324M499 287L504 371M507 290L511 376" stroke="#94938c" strokeWidth="1.500" />
      <path
        d="M413 232L422 236V251L414 246zM507 292L517 299V314L507 309zM420 361L429 366L430 382L421 377zM515 424L524 430L525 444L516 438zM459 256L470 263L469 268L459 261z"
        stroke="#15151c"
        strokeWidth="2.800"
      />
      <g fill="#0a0a10">
        {handles.map(([x, y]) => (
          <circle key={`${x}-${y}`} cx={x} cy={y} r="2.100" />
        ))}
      </g>
      <path
        d="M413 232L422 236V251L414 246zM507 292L517 299V314L507 309zM420 361L429 366L430 382L421 377zM515 424L524 430L525 444L516 438zM430 240V256M499 288V302M459 261L469 268"
        stroke="#dcc8ac"
        strokeWidth="1.400"
      />
      <path d="M436 351L440 353V361L436 359zM502 395L506 397V405L502 403z" stroke="#101010" strokeWidth="2.800" />
      <path d="M436 351L440 353V361L436 359zM502 395L506 397V405L502 403zM436 355H440M502 400H506" stroke="#dce070" />
      <ellipse cx="471.500" cy="394.500" rx="5" ry="10.500" transform="rotate(-20 471.500 394.500)" fill="#1c4a5c" stroke="#3f8cc0" />
      <path d="M468 390V397L471 392V399M474 391V400M476 392V401M466 391L465 393M478 398V400" stroke="#06100c" strokeWidth="1.300" />
    </svg>
  );
}

function OriginPlanes() {
  return (
    <svg viewBox="286 450 98 90" className="absolute top-[388px] left-[286px] h-[90px] w-[98px]" fill="none" stroke="#ececf4" aria-label="Origin planes">
      <path d="M303.500 472L361.500 455.500L365 517L307 534zM288.500 492L350 474.500L381 497L319.500 514.500zM315.500 452.500L350.500 476L353.500 537L319 513z" />
    </svg>
  );
}

function Compass() {
  return (
    <svg viewBox="854 70 62 84" className="absolute top-2 right-[48px] h-[84px] w-[62px]" fill="none" aria-label="Compass">
      <g stroke="#e6e0fa" strokeWidth="1.400" fill="#1f3f57">
        <path d="M884.500 85Q861 96 858.500 122L886 115L903 125Q903 97 884.500 85z" />
        <path d="M894 129L911 141Q905 150 886 150Q862 149 863 138z" />
        <path d="M884.500 78L886.500 115L888 138" />
      </g>
      <circle cx="884" cy="76" r="3" fill="#d8cdf4" />
      <path d="M884 136H892V144H884z" fill="#cc0808" />
      <path d="M857 123L862 129M862 123L857 129M901 124L903.500 127L906 124M903.500 127L902 130M882 80H887L883 84H887" stroke="#9c8c48" strokeWidth="1.200" />
    </svg>
  );
}

function Triad() {
  return (
    <svg viewBox="922 636 34 34" className="absolute right-2 bottom-2.5 h-[34px] w-[34px]" fill="none" stroke="#e8e8f0" aria-label="Axis system">
      <path d="M939.500 647V661L931 663M939.500 661L947 665M938 640H943L938 645.500H943M926 660L931 665M931 660L926 665M948 661L950.500 664.500M953 661L949 668" />
    </svg>
  );
}

/* ---------- page ---------- */

export default function App() {
  return (
    <div className="flex h-screen min-h-[600px] flex-col overflow-hidden bg-[#333365] font-['Liberation_Sans',Arial,sans-serif]">
      <header className="flex h-[62px] shrink-0 flex-col gap-[9px] border-b-2 border-[#55555f] bg-linear-to-b from-[#f6f6fc] via-[#d0cfe7] via-15% to-[#d0cfe7] pt-1 shadow-[inset_0_-4px_2px_#a2a1b2]">
        <div role="toolbar" aria-label="Standard and graphic properties" className="flex h-[23px] items-center">
          <Grip className="mr-1 mb-2 -ml-0.5 w-1.5 border-l-0" />
          <Tools
            items={[
              { icon: "newFile", label: "New" },
              { icon: "open", label: "Open" },
              { icon: "save", label: "Save" },
              { icon: "print", label: "Print" },
              { icon: "cut", label: "Cut", off: true },
              { icon: "copy", label: "Copy", off: true },
              { icon: "paste", label: "Paste" },
              { icon: "undo", label: "Undo", menu: true },
              { icon: "redo", label: "Redo", off: true, menu: true },
              { icon: "helpArrow", label: "What's this?" },
            ]}
          />
          <Grip className="mr-1.5 mb-2 ml-4" />
          <div className="flex items-center gap-[3px]">
            <Combo label="Fill colour" value="">
              <span className="mr-1 h-3 w-[30px] border border-t-2 border-[#444] border-r-[#ccc] border-b-[#ccc] bg-white" />
            </Combo>
            <Combo label="Transparency" value="100%" />
            <Combo label="Line weight" value="">
              <span className="mr-0.5 h-px w-[26px] bg-black" />
            </Combo>
            <Combo label="Line type" value="">
              <span className="ml-1 h-px w-[33px] bg-black" />
            </Combo>
            <Combo label="Point symbol" value="" small>
              <svg viewBox="0 0 9 9" className="h-[9px] w-[9px]" stroke="#222" aria-hidden="true">
                <path d="M1 1L8 8M8 1L1 8" />
              </svg>
            </Combo>
            <Combo label="Render style" value="" small off>
              <svg viewBox="0 0 9 9" className="h-[9px] w-[9px]" fill="none" stroke="#50549c" aria-hidden="true">
                <path d="M4 1H8V8H4" />
                <path d="M1 2V3M1 5V8H4V4" stroke="#a0a0a8" />
              </svg>
            </Combo>
            <Combo label="Layer" value="None" />
          </div>
          <Tools
            items={[
              { icon: "brush", label: "Painter" },
              { icon: "wand", label: "Graphic wizard" },
            ]}
          />
          <div className="ml-auto flex items-center pr-[126px]">
            <Grip className="mr-0.5 mb-2" />
            <Tools
              items={[
                { icon: "dimOff", label: "Dimension off", off: true },
                { icon: "dimOn", label: "Dimension filter" },
              ]}
            />
          </div>
        </div>
        <div role="toolbar" aria-label="Filters and tools" className="flex h-[23px] items-center">
          <Grip className="mr-1 mb-2 -ml-0.5 w-1.5 border-l-0" />
          <Tools
            items={[
              { icon: "point", label: "Point filter" },
              { icon: "spline", label: "Curve filter" },
              { icon: "surface", label: "Surface filter" },
              { icon: "tag", label: "Volume filter" },
            ]}
          />
          <Divider className="mr-0.5" />
          <Tools
            items={[
              { icon: "solidPick", label: "Feature element filter" },
              { icon: "edgePick", label: "Geometrical element filter" },
            ]}
          />
          <Divider className="mx-0.5" />
          <Tool icon="assemblyPick" label="Intersection edges" />
          <Divider className="mr-1 ml-0.5" />
          <Tool icon="gridPick" label="Work on support" />
          <Divider className="mr-1" />
          <Tool icon="dotsPick" label="Snap to point" />
          <Grip className="mr-1.5 mb-2 ml-[22px]" />
          <Tools
            items={[
              { icon: "greenGears", label: "Insert body", menu: true },
              { icon: "geomSet", label: "Insert geometrical set", menu: true },
              { icon: "treeDisabled", label: "Insert ordered set", off: true },
            ]}
          />
          <Grip className="mr-1.5 mb-2 ml-5" />
          <Tools
            items={[
              { icon: "envelope", label: "Send" },
              { icon: "fourBoxes", label: "Components" },
              { icon: "boxHelp", label: "Identify component" },
            ]}
          />
          <Grip className="mr-1.5 mb-2 ml-[34px]" />
          <Tool icon="catalog" label="Catalog browser" />
          <Grip className="mr-1.5 mb-2 ml-3" />
          <Tools
            items={[
              { icon: "measure", label: "Measure between" },
              { icon: "caliper", label: "Measure item" },
              { icon: "weight", label: "Measure inertia" },
            ]}
          />
        </div>
      </header>

      <div className="flex min-h-0 flex-1">
        <main className="relative flex min-w-0 flex-1 flex-col overflow-hidden bg-[#333365]">
          <SpecTree />
          <Model />
          <OriginPlanes />
          <Compass />
          <Triad />

          <Palette
            title="Select"
            className="absolute top-[53px] left-[421px]"
            items={[
              { icon: "orangeArrow", label: "Select" },
              { icon: "selTrap", label: "Rectangle selection trap" },
              { icon: "selIntersect", label: "Intersecting trap" },
              { icon: "selPolygon", label: "Polygon trap" },
              { icon: "selPaint", label: "Paint stroke selection" },
              { icon: "selOutTrap", label: "Outside trap" },
              { icon: "selOutIntersect", label: "Intersecting outside trap" },
            ]}
          />

          <div className="absolute top-[131px] right-1 flex flex-col items-end">
            <Palette
              title="Transform..."
              items={[
                { icon: "translate", label: "Translation", off: true },
                { icon: "rotate", label: "Rotation", off: true },
                { icon: "mirror", label: "Symmetry", off: true },
              ]}
            />
            <Palette
              title="Patterns"
              items={[
                { icon: "rectPattern", label: "Rectangular pattern", off: true },
                { icon: "circPattern", label: "Circular pattern", off: true },
                { icon: "userPattern", label: "User pattern", off: true },
              ]}
            />
            <Palette
              title="Fillets"
              items={[
                { icon: "fillet", label: "Edge fillet", off: true },
                { icon: "faceFillet", label: "Face-face fillet", off: true },
                { icon: "triFillet", label: "Tritangent fillet", off: true },
                { icon: "variFillet", label: "Variable fillet", off: true },
              ]}
            />
            <Palette
              title="Boolean O..."
              items={[
                { icon: "boolAssemble", label: "Add" },
                { icon: "boolAdd", label: "Remove" },
                { icon: "boolRemove", label: "Intersect" },
              ]}
            />
            <Palette
              title="Remo..."
              items={[
                { icon: "shellBox", label: "Remove face", off: true },
                { icon: "removeFace", label: "Replace face", off: true },
              ]}
            />
          </div>

          <Palette
            title="2D Visualization Mode"
            className="absolute bottom-0.5 left-[163px]"
            items={[
              { icon: "sheetCyan", label: "Pickable visible background" },
              { icon: "sheetOff", label: "No 3D background", off: true },
              { icon: "sheetStop", label: "Unpickable background" },
              { icon: "sheetGreen", label: "Low intensity background" },
              { icon: "sheetGreenStop", label: "Unpickable low intensity background" },
            ]}
            after={[{ icon: "cloudOff", label: "Lock current viewpoint", off: true }]}
          />
          <Palette
            title="Quick view"
            className="absolute bottom-px left-[329px]"
            items={[
              { icon: "cubeSolid", label: "Isometric view" },
              { icon: "cubeFront", label: "Front view" },
              { icon: "cubeBack", label: "Back view" },
              { icon: "cubeLeft", label: "Left view" },
              { icon: "cubeRight", label: "Right view" },
              { icon: "cubeTop", label: "Top view" },
              { icon: "cubeBottom", label: "Bottom view" },
              { icon: "namedViews", label: "Named views" },
            ]}
          />
          <Palette
            title="Product Knowl..."
            className="absolute bottom-0.5 left-[540px]"
            items={[
              { icon: "bookPen", label: "Knowledge template" },
              { icon: "factory", label: "Save in catalog" },
              { icon: "pageBrick", label: "Document template" },
              { icon: "blueDisk", label: "Store template" },
            ]}
          />
          <Palette
            title="Produ..."
            className="absolute bottom-0.5 left-[660px]"
            items={[
              { icon: "transferA", label: "Instantiate from document" },
              { icon: "transferB", label: "Instantiate from selection" },
            ]}
          />
        </main>

        <aside
          aria-label="Part design tools"
          className="flex w-[60px] shrink-0 gap-2 overflow-hidden border-l-4 border-[#f8f8fe] bg-linear-to-r from-[#dddcee] via-[#d0cfe7] via-20% to-[#d0cfe7] pl-px"
        >
          <div className="flex w-[23px] shrink-0 flex-col">
            <SideGrip className="h-3" />
            <Tool icon="translate" label="Transformations" off menu />
            <SideRule />
            <Tools
              items={[
                { icon: "mirror", label: "Mirror", off: true },
                { icon: "rectPattern", label: "Pattern", off: true, menu: true },
              ]}
            />
            <SideRule />
            <Tool icon="scale" label="Scaling" off />
            <SideGrip className="h-5" />
            <Tools
              items={[
                { icon: "pad", label: "Pad", menu: true },
                { icon: "pocket", label: "Pocket", off: true, menu: true },
                { icon: "shaft", label: "Shaft" },
                { icon: "groove", label: "Groove", off: true },
                { icon: "hole", label: "Hole", off: true },
                { icon: "rib", label: "Rib" },
                { icon: "slot", label: "Slot", off: true },
                { icon: "stiffener", label: "Stiffener", menu: true },
                { icon: "loft", label: "Multi-sections solid" },
                { icon: "removeLoft", label: "Removed multi-sections solid", off: true },
              ]}
            />
            <SideGrip />
            <Tools
              items={[
                { icon: "split", label: "Split", off: true },
                { icon: "thickSurface", label: "Thick surface" },
                { icon: "closeSurface", label: "Close surface" },
                { icon: "sew", label: "Sew surface", off: true },
              ]}
            />
          </div>
          <div className="flex w-[23px] shrink-0 flex-col">
            <SideGrip className="h-[9px]" />
            <Tool icon="gearSurface" label="Workbench" />
            <SideGrip className="h-5" />
            <Tool icon="orangeArrow" label="Selection mode" menu />
            <SideGrip />
            <Tool icon="sketch" label="Sketcher" menu />
            <SideGrip className="h-4" />
            <Tools
              items={[
                { icon: "point", label: "Point" },
                { icon: "line", label: "Line" },
                { icon: "plane", label: "Plane" },
              ]}
            />
            <SideGrip />
            <Tool icon="hexBlock" label="Local axis" off />
            <SideGrip />
            <Tools
              items={[
                { icon: "fillet", label: "Fillet", off: true, menu: true },
                { icon: "chamfer", label: "Chamfer", off: true },
                { icon: "draftBox", label: "Draft angle", off: true, menu: true },
                { icon: "thickness", label: "Shell", off: true },
                { icon: "thread", label: "Thickness", off: true },
                { icon: "target", label: "Thread", off: true },
                { icon: "shellBox", label: "Remove", off: true, menu: true },
              ]}
            />
            <SideGrip />
            <Tool icon="boolTrim" label="Assemble" />
            <SideRule />
            <Tools
              items={[
                { icon: "boolAssemble", label: "Boolean add", menu: true },
                { icon: "boolLump", label: "Union trim" },
              ]}
            />
            <SideRule />
            <Tool icon="boolPair" label="Remove lump" />
          </div>
        </aside>
      </div>
    </div>
  );
}
